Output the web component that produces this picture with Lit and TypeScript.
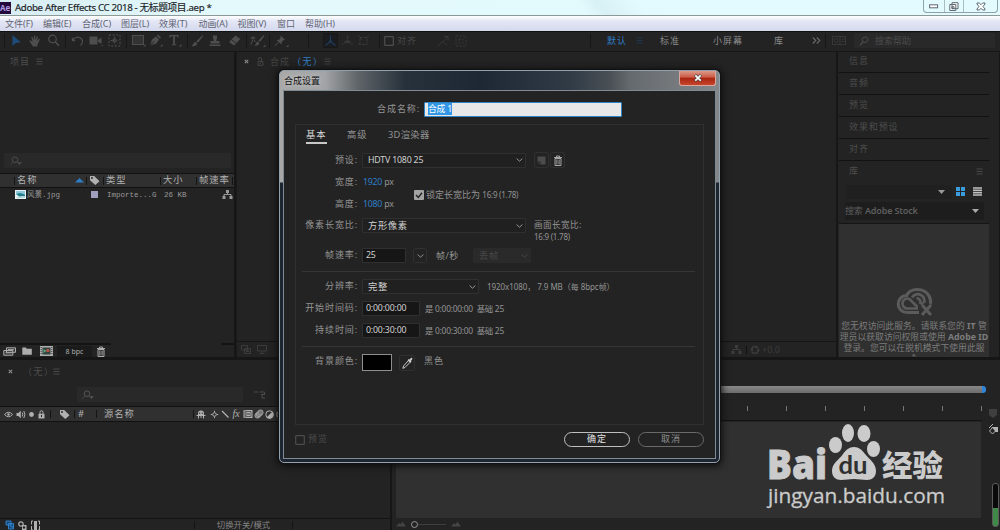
import { LitElement, html, css, svg } from "lit";
import { customElement, property } from "lit/decorators.js";

type Glyph = { w: number; h: number; d: unknown };

const trash = svg`<path d="M1 2.5h8M3.5 2V1h3v1M2 3.5h6V10.5H2zM3.9 4.5v5M6.1 4.5v5" fill="none" stroke="currentColor"/>`;
const tag = svg`<path d="M1 1h4.2L10.5 6.2 6.3 10 1 5.2z" fill="currentColor"/><circle cx="3" cy="3" r=".9" fill="#222"/>`;
const tree = svg`<path d="M4 1h3v3H4zM.5 7h3v3h-3zM7.5 7h3v3h-3z" fill="currentColor"/><path d="M5.5 4v1.5M2 7V5.5h7V7" fill="none" stroke="currentColor"/>`;

const glyphs: Record<string, Glyph> = {
  arrow: { w: 11, h: 13, d: svg`<path d="M1.5 1v11l3.2-3 5-.8z" fill="currentColor"/>` },
  hand: { w: 12, h: 12, d: svg`<path d="M4 11.5 1 7 .5 5.5l1-.3L3.600 7 2.300 2l1-.5L5 5.200 5 .6h1.100L6.500 5 7.900 1.200l1 .3L8.200 6l2-2.300.9.6L9 8.500 8 11.500z" fill="currentColor"/>` },
  zoom: { w: 13, h: 13, d: svg`<circle cx="5.500" cy="5" r="3.800" fill="none" stroke="currentColor" stroke-width="1.200"/><path d="M8.200 7.800 12 11.800" stroke="currentColor" stroke-width="1.600"/>` },
  rotate: { w: 13, h: 12, d: svg`<path d="M2.500 4.500A4.800 4.300 0 0 1 11 8.500L9.500 10.500" fill="none" stroke="currentColor" stroke-width="1.200"/><path d="M.8 2v4.200h4z" fill="currentColor"/>` },
  camera: { w: 15, h: 11, d: svg`<path d="M.5 1.500h8v8h-8zM9 5l3.500-2.500v6.500L9 6.800zM12 10h2.500l-1.200 1z" fill="currentColor"/>` },
  pan: { w: 13, h: 13, d: svg`<rect x="1" y="1" width="11" height="11" fill="none" stroke="currentColor" stroke-dasharray="2 1.600"/><path d="M6.500 2.500v8M2.500 6.500h8" stroke="currentColor" stroke-dasharray="1.500 1"/><circle cx="6.500" cy="6.500" r="1.800" fill="none" stroke="currentColor"/>` },
  rect: { w: 15, h: 13, d: svg`<rect x="1.500" y="1.500" width="11" height="9" fill="#333" stroke="currentColor"/><path d="M14.500 10v2.500H12z" fill="currentColor"/>` },
  pen: { w: 14, h: 13, d: svg`<path d="M1 11.500 3 5.500 7 2.500 10 5.500 7.300 9.500zM7.800 1.500 9 .5l3 3-1.200 1.200z" fill="currentColor"/><path d="m1 11.500 4-4" stroke="#222"/><path d="M13.500 10v2.500H11z" fill="currentColor"/>` },
  type: { w: 14, h: 13, d: svg`<path d="M1.500 1h9v2.800h-.9L9 2.300H6.900v7.900l1.400.3v.8H3.700v-.8l1.400-.3V2.300H3l-.6 1.500h-.9z" fill="currentColor"/><path d="M13.500 10v2.500H11z" fill="currentColor"/>` },
  brush: { w: 13, h: 12, d: svg`<path d="M11.800.3 5.300 6.200l1.500 1.500L12.300 1zM4.600 7C2.200 7 2.900 9.500.5 11c2.500.6 5.500 0 5.600-2.500z" fill="currentColor"/>` },
  stamp: { w: 12, h: 12, d: svg`<path d="M4 .5h4v2.300L7.200 6h3.300v2.500h-9V6h3.300L4 2.800zM.5 9.500h11v1.500H.5z" fill="currentColor"/>` },
  eraser: { w: 13, h: 11, d: svg`<path d="M7.500.5 12.300 4 6 10.500 1 7z" fill="currentColor"/><path d="m3.500 4.800 5 3.500" stroke="#222" stroke-width=".8"/>` },
  roto: { w: 16, h: 12, d: svg`<path d="M13.500.3 8.500 5.500 10 7 14.300 1zM8 6.500C6 6.500 6.500 9 4.500 10.500c2 .5 4.500 0 4.700-2.500z" fill="currentColor"/><path d="M.5 3h5M3 1v3.500L.8 9.500M4 5l1.500 2" fill="none" stroke="currentColor"/><path d="M15.500 9.500V12H13z" fill="currentColor"/>` },
  pin: { w: 15, h: 12, d: svg`<path d="M6.500.5 11 4.800 9.500 5.300 7.800 7l-.3 2.500L2.500 5l2.700-.3L6.500 3z" fill="currentColor"/><path d="M4.500 7.200.8 11" stroke="currentColor"/><path d="M14.500 9.500V12H12z" fill="currentColor"/>` },
  axis: { w: 13, h: 13, d: svg`<path d="M-.5-.500h14v14h-14z" fill="#1a1c20" stroke="#181818"/><path d="M6.500 1.500v6M6.500 7.500l-5 4M6.500 7.500l5 4" stroke="currentColor" stroke-width="1.300" fill="none"/><circle cx="6.500" cy="7.500" r="1.600" fill="currentColor"/>` },
  world: { w: 13, h: 13, d: svg`<path d="M6.500 1.500v5M5.500 7l-4 3.500M7.500 7l4 3.500" stroke="currentColor" stroke-dasharray="3 1" stroke-width="1.400" fill="none"/><path d="M4.500 6.500h4v2.500h-4z" fill="currentColor"/>` },
  viewax: { w: 13, h: 13, d: svg`<path d="M3 3.500h7v7H3zM1 1l4 5M12 1 9 4M1 11l3-3" stroke="currentColor" stroke-dasharray="3 1" fill="none"/>` },
  snap: { w: 12, h: 12, d: svg`<path d="m1 11 4.500-4.500M7 1.500h4v4M11 1.500 6 6.500l4 4" stroke="currentColor" fill="none"/>` },
  grid: { w: 12, h: 12, d: svg`<path d="M1 1h10v10H1zM4 4h4v4H4z" stroke="currentColor" stroke-dasharray="2 1.500" fill="none"/>` },
  menu: { w: 7, h: 7, d: svg`<path d="M.5 1h6M.5 3.500h6M.5 6h6" stroke="currentColor" stroke-width=".9"/>` },
  sync: { w: 14, h: 9, d: svg`<path d="M.5.5h13v8H.5zM8 .5v8M9.500 3h3M9.500 5.500h3" fill="none" stroke="currentColor"/><circle cx="4.300" cy="4.500" r="2" fill="none" stroke="currentColor"/>` },
  more: { w: 9, h: 7, d: svg`<path d="m.8.500 3 3-3 3M4.800.5l3 3-3 3" fill="none" stroke="currentColor" stroke-width="1.100"/>` },
  find: { w: 13, h: 10, d: svg`<circle cx="6" cy="3.700" r="2.800" fill="none" stroke="currentColor"/><path d="m4 5.800-3 3.500M8.500 6.500h4L10.500 8.500z" stroke="currentColor" stroke-width=".6" fill="currentColor"/>` },
  search: { w: 10, h: 10, d: svg`<circle cx="6" cy="3.700" r="2.800" fill="none" stroke="currentColor"/><path d="m4 5.800-3 3.500" stroke="currentColor" stroke-width="1.300"/>` },
  x: { w: 5, h: 5, d: svg`<path d="m.8.800 3.400 3.400M4.200.8.800 4.200" stroke="currentColor" stroke-width="1.100"/>` },
  lock: { w: 7, h: 9, d: svg`<path d="M2 4V2.200a1.500 1.500 0 0 1 3 0V4" fill="none" stroke="currentColor"/><path d="M.5 3.800h6v4.700h-6z" fill="currentColor"/><path d="M3.500 5v2" stroke="#222"/>` },
  unlock: { w: 7, h: 9, d: svg`<path d="M1.500 3V2a1.500 1.500 0 0 1 3 0V4M1 4.500h5v3.800H1zM3.500 5.500v1.500" fill="none" stroke="currentColor"/>` },
  up: { w: 9, h: 5, d: svg`<path d="M0 4.500 4.500 0 9 4.500z" fill="currentColor"/>` },
  down: { w: 7, h: 4, d: svg`<path d="M0 0h7L3.500 4z" fill="currentColor"/>` },
  chev: { w: 7, h: 4, d: svg`<path d="M.6.500 3.500 3.200 6.400.5" fill="none" stroke="currentColor"/>` },
  tag: { w: 11, h: 11, d: tag },
  tree: { w: 11, h: 11, d: tree },
  image: { w: 11, h: 9, d: svg`<path d="M0 0h11v9H0z" fill="#e6f2f4"/><path d="M1 1h9v3H1z" fill="#8bc7d8"/><path d="M1 4 5 3l5 1.500V6L4 6.500z" fill="#237e8c"/><path d="M1 7.500 10 6v2H1z" fill="#b5d3d8"/>` },
  footage: { w: 13, h: 9, d: svg`<path d="M3.500.8h9v4.500h-9zM.8 3.500h9v4.700h-9z" stroke="currentColor" fill="#333"/><path d="M2.500 5.800h6M5 2.600h6" stroke="currentColor"/>` },
  folder: { w: 10, h: 8, d: svg`<path d="M.3.500h3.500l1 1.200h5v6H.3z" fill="currentColor"/>` },
  comp: { w: 13, h: 10, d: svg`<path d="M0 0h13v10H0z" fill="currentColor"/><path d="M2.500 1.500h8v7h-8z" fill="#2f4340"/><path d="m3.500 3 3 2-3 2z" fill="#59a37a"/><circle cx="7.800" cy="4.500" r="1.800" fill="#b65045"/><path d="M1.200 1v8M11.800 1v8" stroke="#333" stroke-dasharray="1 1"/>` },
  trash: { w: 10, h: 11, d: trash },
  layers: { w: 10, h: 9, d: svg`<path d="M.5.500h6v4.500h-6zM3.500 3.500h6v5h-6z" fill="none" stroke="currentColor"/><path d="M5 5h3v2H5z" fill="currentColor"/>` },
  monitor: { w: 10, h: 9, d: svg`<path d="M.5.500h9v5.500h-9zM5 6v2M2.500 8.500h5" fill="none" stroke="currentColor"/>` },
  aperture: { w: 10, h: 10, d: svg`<circle cx="5" cy="5" r="3.300" fill="none" stroke="currentColor" stroke-width="2.200"/><path d="m5 .5-1.500 3M9 3.500 6 4M8.500 8 6.500 5.800M4.500 9.500 5.500 6.500M1 6.500 4 6" stroke="#222" stroke-width=".7"/>` },
  eye: { w: 9, h: 7, d: svg`<path d="M.5 3.500Q4.500-1 8.500 3.500 4.500 8 .5 3.500z" fill="none" stroke="currentColor"/><circle cx="4.500" cy="3.500" r="1.200" fill="currentColor"/>` },
  speaker: { w: 10, h: 9, d: svg`<path d="M.5 3h1.800L4.800.8v7.400L2.300 6H.5z" fill="currentColor"/><path d="M6.200 2.500q1.200 2 0 4M7.800 1q2.200 3.500 0 7" fill="none" stroke="currentColor"/>` },
  dot: { w: 5, h: 5, d: svg`<circle cx="2.500" cy="2.500" r="2.400" fill="currentColor"/>` },
  shy: { w: 10, h: 9, d: svg`<path d="M2 5V3.500a3 3 0 0 1 6 0V5zM.5 5h9v1h-9z" fill="currentColor"/><path d="M2.500 6v2.500M5 2v6M7.500 6v2.500" stroke="currentColor"/><path d="M3.700 2.500v1.500M6.300 2.500v1.500" stroke="#333"/>` },
  sun: { w: 9, h: 9, d: svg`<circle cx="4.500" cy="4.500" r="1.800" fill="none" stroke="currentColor"/><path d="M4.500.8v1.400M4.500 6.800v1.400M.8 4.500h1.400M6.800 4.500h1.400" stroke="currentColor"/>` },
  slash: { w: 9, h: 9, d: svg`<path d="m1 1 6.500 6.500" stroke="currentColor" stroke-width="1.300"/>` },
  fxbox: { w: 10, h: 10, d: svg`<path d="M.5 1h9v8h-9z" fill="currentColor"/><path d="M3 2.500h5v5H3zM2 1v8" stroke="#444" stroke-width=".8" fill="none"/><path d="M4 4.500h3v1H4z" fill="#333"/>` },
  blur: { w: 10, h: 10, d: svg`<circle cx="3.500" cy="6.500" r="2.600" fill="#777" stroke="currentColor" stroke-width=".8"/><circle cx="5" cy="5" r="2.600" fill="#777" stroke="currentColor" stroke-width=".8"/><circle cx="6.500" cy="3.500" r="2.600" fill="#777" stroke="currentColor" stroke-width=".8"/>` },
  adjust: { w: 9, h: 9, d: svg`<circle cx="4.500" cy="4.500" r="3.700" fill="none" stroke="currentColor"/><path d="M7.500 1.500a4 4 0 0 1-6 6z" fill="currentColor"/>` },
  cube: { w: 9, h: 9, d: svg`<path d="M4.500.5 8 2.500v4L4.500 8.500 1 6.500v-4zM1 2.500l3.500 2 3.500-2M4.500 4.500v4" fill="none" stroke="currentColor"/>` },
  flow: { w: 12, h: 9, d: svg`<path d="M0 2h4M5.500 2h5v2M7 4.500h4M8 5v3h3" stroke="currentColor" fill="none"/>` },
  tiles: { w: 9, h: 9, d: svg`<path d="M0 0h4v4H0zM5 0h4v4H5zM0 5h4v4H0zM5 5h4v4H5z" fill="currentColor"/>` },
  list: { w: 9, h: 9, d: svg`<path d="M0 1h9M0 3.300h9M0 5.600h9M0 8h9" stroke="currentColor" stroke-width="1.600"/>` },
  cloud: { w: 37, h: 29, d: svg`<path d="M10 24.500A8.500 8.500 0 0 1 9.500 7.500C12 2.500 17 1.500 20 1.500c7 0 12 4 13.500 10.500a8 8 0 0 1-1 5.500M10 24.500h12" fill="none" stroke="currentColor" stroke-width="3.200"/><path d="m20.500 19-8-8a5 5 0 1 0-1.500 9.500h10M15 9.500a6.500 6.500 0 0 1 11.500 6.500l-3-1a5 5 0 0 0-4-5" fill="none" stroke="currentColor" stroke-width="2.700"/><path d="m25 17 9 10M34 17l-9 10" stroke="#303030" stroke-width="7"/><path d="m25 17 9 10M34 17l-9 10" stroke="currentColor" stroke-width="3"/>` },
  save: { w: 9, h: 9, d: svg`<path d="M.5.500h8v8h-5v-3h-3z" fill="currentColor"/><path d="M.5 6.500h2v2z" fill="currentColor"/>` },
  dropper: { w: 11, h: 12, d: svg`<path d="m6.500 3.500-5 5.500L.8 11.300 3 10.500 8 5.300" fill="none" stroke="currentColor"/><path d="M5.500 3.200 6.700 2l.8.500L9.300.500l1.300 1.200L9 4l.5.800-1.300 1.200z" fill="currentColor"/>` },
  check: { w: 10, h: 10, d: svg`<rect width="10" height="10" rx="1" fill="#a3a3a3"/><path d="m2 5 2.300 2.500L8 2.800" fill="none" stroke="#222" stroke-width="1.400"/>` },
  box: { w: 10, h: 10, d: svg`<rect x=".7" y=".7" width="8.600" height="8.600" rx=".6" fill="none" stroke="currentColor" stroke-width="1.200"/>` },
  closeX: { w: 8, h: 8, d: svg`<path d="m1 1 6 6M7 1 1 7" stroke="#444" stroke-width="3"/><path d="m1.300 1.300 5.400 5.400M6.700 1.300 1.300 6.700" stroke="#fff" stroke-width="1.700"/>` },
  winMin: { w: 10, h: 5, d: svg`<rect x=".6" y=".8" width="8" height="3" fill="#fff" stroke="#5d6871"/>` },
  winMax: { w: 10, h: 9, d: svg`<path d="M3 .7h6v6H3zM.8 2.500h6v6h-6zM3 4.700h2v1.800H3z" fill="#fff" stroke="#5d6871"/>` },
  winX: { w: 10, h: 9, d: svg`<path d="M1 1h2.300L5 2.700 6.700 1H9v1L7 4.500 9 7v1H6.700L5 6.300 3.300 8H1V7l2-2.500L1 2z" fill="#fff" stroke="#5d6871"/>` },
  toggle1: { w: 10, h: 10, d: svg`<path d="M1 1h5v4H1zM3.500 3.500h5V9h-5z" fill="#184a78" stroke="currentColor"/><path d="M5 6h2v2" stroke="currentColor" fill="none"/>` },
  toggle2: { w: 9, h: 9, d: svg`<circle cx="3" cy="3" r="2.200" fill="none" stroke="currentColor" stroke-width="1.200"/><path d="M4 4h4.500v5H4z" fill="currentColor"/><circle cx="6" cy="6.500" r="1.200" fill="#222"/>` },
  toggle3: { w: 9, h: 9, d: svg`<path d="M3 0h3v9H3z" fill="currentColor"/><path d="M2 0H.5v3.500M.5 5v4H2M7 0h1.500v3.500M8.500 5v4H7" stroke="currentColor" fill="none"/>` },
  mount: { w: 10, h: 6, d: svg`<path d="M0 5.500 3 2l1.500 1.500L6.500.5 10 5.500z" fill="currentColor"/>` },
  marker: { w: 8, h: 9, d: svg`<path d="M0 0h8v6L4 9 0 6z" fill="currentColor"/>` },
  keys: { w: 10, h: 11, d: svg`<path d="M3.500 3H10v5H6z" fill="currentColor"/><path d="m4.500 3.500 3 3.500-3 3-3-3zM5 0 1 4" fill="#222" stroke="currentColor"/>` },
};

@customElement("ae-icon")
class AeIcon extends LitElement {
  @property() name = "";
  static styles = css`
    :host { display: inline-flex; flex: none; }
    svg { display: block; overflow: visible; }
  `;
  render() {
    const g = glyphs[this.name];
    return html`<svg width=${g.w} height=${g.h} viewBox="0 0 ${g.w} ${g.h}">${g.d}</svg>`;
  }
}

const ic = (name: string, cls = "") => html`<span class="c ${cls}"><ae-icon name=${name}></ae-icon></span>`;
const sep = html`<span class="c"><i class="sep"></i></span>`;

const base = css`
  * { box-sizing: border-box; }
  :host { font-family: "Noto Sans", "Noto Sans CJK SC", sans-serif; font-size: 9px; line-height: 14px; white-space: nowrap; }
  .c { display: flex; align-items: center; justify-content: center; min-width: 0; }
  .sep { width: 1px; height: 8px; background: #141414; }
  .t { letter-spacing: 1px; }
  .blue { color: #2f7fc8; }
`;

@customElement("comp-dialog")
class CompDialog extends LitElement {
  static styles = [base, css`
    :host { display: flex; flex-direction: column; width: 441px; height: 393px; border: 1px solid #93a1ad; border-radius: 5px; padding: 0 3px 3px; color: #939393;
      background: linear-gradient(#0000 0 111px, #1d2630 112px) , linear-gradient(90deg, #a8a8a8 0, #a2a4a6 45px, #5f6468 78px, #27313b 125px, #1d2834 200px, #303b46 290px, #4a5055 330px, #656a6e 350px, #85888b 100%);
      box-shadow: 0 0 0 1px #111, 0 1px 7px 2px #0d0d0d; }
    .bar { display: flex; justify-content: space-between; height: 19px; padding-left: 1px; color: #101010; font-size: 9px; line-height: 19px; text-shadow: 0 0 4px #ddd; }
    .close { width: 37px; height: 15px; border: 1px solid #d9a79d; border-top: 0; border-radius: 0 0 3px 3px; background: linear-gradient(#dc9a8a 0, #cb5a45 45%, #a8240f 50%, #c8452c); }
    .body { flex: 1; border: 1px solid #7f8c96; background: #232323; padding: 11px 11px 0; display: flex; flex-direction: column; }
    .row { display: grid; align-items: center; }
    .name { grid-template-columns: 125px 198px; column-gap: 4px; height: 15px; margin-bottom: 7px; }
    .lab { text-align: right; letter-spacing: .9px; padding-bottom: 1px; }
    .field { height: 15px; background: #161616; border: 1px solid #303030; border-radius: 1px; color: #d0d0d0; padding-left: 3px; line-height: 13px; font-size: 8.8px; letter-spacing: -0.2px; }
    .title { background: #e8e8e8; border-color: #2e83c4; padding-left: 3px; }
    .title span { background: #3296e6; color: #fff; display: inline-block; height: 12px; line-height: 12px; font-size: 8.8px; }
    .group { border: 1px solid #303030; height: 301px; width: 409px; padding: 0 9px 0 6px; }
    .tabs { display: grid; grid-template-columns: 41px 41px 60px; padding: 2px 0 0 4px; height: 27px; line-height: 15px; letter-spacing: 1px; font-size: 9.3px; }
    .tabs .sm { letter-spacing: .3px; }
    .on span { color: #d8d8d8; border-bottom: 2px solid #c8c8c8; display: inline-block; padding-bottom: 1px; height: 17px; width: 21px; }
    .select { display: flex; align-items: center; justify-content: space-between; padding: 0 2px 0 5px; background: #202020; }
    .select ae-icon { color: #999; }
    .off ae-icon { color: #474747; }
    .cjk { letter-spacing: .6px; font-size: 9.3px; }
    .lat { letter-spacing: -0.25px; font-size: 8.8px; }
    .btn { height: 16px; border: 1px solid #303030; border-radius: 2px; }
    .preset { grid-template-columns: 56px 164px 19px 19px; column-gap: 4px; height: 16px; }
    .preset .save { margin-left: 4px; width: 15px; color: #4c4c4c; }
    .preset .del { margin-left: -3px; width: 15px; color: #a5a5a5; }
    .size { grid-template-columns: 56px 46px 1fr; column-gap: 5px; height: 44px; margin-top: 3px; grid-template-rows: 22px 22px; }
    .lockrow { grid-column: 3; grid-row: 1 / 3; display: flex; align-items: center; gap: 2px; margin-top: 4px; }
    .lockrow .lat { font-size: 8px; }
    .aspect { grid-template-columns: 56px 164px 1fr; grid-template-rows: 22px; column-gap: 4px; height: 22px; margin-top: 0; }
    .aspect .field { margin-top: -1px; } .aspect .lab { margin-top: -1px; }
    .aspect .note { margin-left: 4px; line-height: 11px; align-self: start; padding-top: 4px; font-size: 8px; }
    .note .cjk { font-size: 8.600px; letter-spacing: 0.4px; }
    .rate { grid-template-columns: 56px 44px 17px 36px 67px; column-gap: 4px; height: 15px; margin-top: 11px; }
    .rate .pick { margin-left: 3px; width: 14px; height: 15px; }
    .rate .fps { margin-left: 5px; letter-spacing: .4px; }
    .rate .off { margin-left: 2px; background: #2a2a2a; color: #474747; border-color: #2a2a2a; width: 58px; }
    hr { height: 1px; border: 0; background: #363636; margin: 8px -1px 7px 0; }
    .res { grid-template-columns: 56px 117px 1fr; column-gap: 4px; height: 15px; }
    .res .lat { margin-left: 4px; letter-spacing: -.06px; font-size: 8px; }
    .time { grid-template-columns: 56px 58px 1fr; column-gap: 4px; height: 15px; margin-top: 7px; }
    .time .lat { margin-left: 1px; font-size: 8.4px; }
    .color { grid-template-columns: 56px 30px 19px 1fr; column-gap: 4px; height: 17px; }
    .swatch { height: 17px; background: #000; border: 1px solid #8e8e8e; }
    .pickc { margin-left: 3px; width: 16px; color: #c8c8c8; }
    .blk { margin-left: 5px; }
    .raise { padding-bottom: 3px; }
    .foot { display: flex; align-items: center; height: 17px; margin-top: 6px; color: #4c4c4c; gap: 3px; width: 409px; }
    .foot .t { flex: 1; padding-bottom: 2px; }
    .pill { width: 66px; height: 15px; border: 1px solid #6a6a6a; border-radius: 8px; color: #8f8f8f; text-align: center; line-height: 12px; letter-spacing: 1px; margin-left: 5px; }
    .ok { border-color: #c0c0c0; color: #e2e2e2; }
  `];
  render() {
    return html`
      <div class="bar"><span>合成设置</span><span class="close c"><ae-icon name="closeX"></ae-icon></span></div>
      <div class="body">
        <div class="row name"><span class="lab">合成名称:</span><div class="field title"><span>合成 1</span></div></div>
        <div class="group">
          <div class="tabs"><div class="on"><span>基本</span></div><span>高级</span><span class="sm">3D渲染器</span></div>
          <div class="row preset"><span class="lab">预设:</span><div class="field select"><span>HDTV 1080 25</span><ae-icon name="chev"></ae-icon></div>${ic("save", "btn save")}${ic("trash", "btn del")}</div>
          <div class="row size">
            <span class="lab">宽度:</span><span class="lat"><span class="blue">1920</span> px</span>
            <div class="lockrow"><ae-icon name="check"></ae-icon><span>锁定长宽比为 <span class="lat">16:9 (1.78)</span></span></div>
            <span class="lab">高度:</span><span class="lat"><span class="blue">1080</span> px</span>
          </div>
          <div class="row aspect"><span class="lab">像素长宽比:</span><div class="field select"><span class="cjk">方形像素</span><ae-icon name="chev"></ae-icon></div><div class="note lat"><span class="cjk">画面长宽比:</span><br>16:9 (1.78)</div></div>
          <div class="row rate"><span class="lab">帧速率:</span><div class="field">25</div><span class="btn c pick"><ae-icon name="chev"></ae-icon></span><span class="fps">帧/秒</span><div class="field select off"><span class="cjk">丢帧</span><ae-icon name="chev"></ae-icon></div></div>
          <hr>
          <div class="row res"><span class="lab">分辨率:</span><div class="field select"><span class="cjk">完整</span><ae-icon name="chev"></ae-icon></div><span class="lat">1920x1080， 7.9 MB（每 8bpc帧）</span></div>
          <div class="row time"><span class="lab">开始时间码:</span><div class="field">0:00:00:00</div><span class="lat">是 0:00:00:00 &nbsp;基础 25</span></div>
          <div class="row time"><span class="lab">持续时间:</span><div class="field">0:00:30:00</div><span class="lat">是 0:00:30:00 &nbsp;基础 25</span></div>
          <hr>
          <div class="row color"><span class="lab raise">背景颜色:</span><div class="swatch"></div><span class="btn c pickc"><ae-icon name="dropper"></ae-icon></span><span class="t blk raise">黑色</span></div>
        </div>
        <div class="foot"><ae-icon name="box"></ae-icon><span class="t">预览</span><div class="pill ok">确定</div><div class="pill">取消</div></div>
      </div>`;
  }
}

@customElement("app-root")
class AppRoot extends LitElement {
  static styles = [base, css`
    :host { display: flex; flex-direction: column; width: 1000px; height: 530px; overflow: hidden; position: relative; background: #161616; color: #4d4d4d; }
    .r { display: grid; align-items: center; }
    .r > .c { align-self: stretch; }
    .titlebar { display: grid; grid-template-columns: 15px 1fr 77px; height: 16px; flex: none; border-bottom: 1px solid #8b9998; color: #1b2226; font-size: 9.7px; line-height: 15px;
      background: linear-gradient(50deg, #0000 58%, #cfe9ee88 60%, #0000 64%), linear-gradient(90deg, #d7edf3, #e3f9fc 22%, #e3fbff); }
    .logo { width: 11px; height: 12px; margin-top: 2px; background: #240a3c; color: #b09be0; font-size: 8px; line-height: 12px; font-weight: bold; }
    .title { letter-spacing: -.34px; -webkit-text-stroke: .15px #1b2226; }
    .win { display: grid; grid-template-columns: 20px 19px 34px; width: 75px; height: 13px; border: 1px solid #8fa2a7; border-top: 0; border-radius: 0 0 4px 4px; }
    .win .c + .c { border-left: 1px solid #a9bcc0; }
    .menubar { grid-template-columns: 38px 39px 39px 38px 39.500px 39px 39.500px 28px 1fr; flex: none; padding-left: 5px; height: 15px; color: #5f6473; font-size: 9px; background: linear-gradient(#fff, #e3e6f5 35%, #d5d9ed); line-height: 14px; }
    .toolbar { height: 20px; flex: none; border-top: 1px solid #111; background: #232323; color: #4e4e4e; padding-bottom: 2px;
      grid-template-columns: 8px 17px 19px 18px 6px 18px 20px 16px 8px 16px 20px 18px 6px 15px 20px 18px 6px 18px 4px 21px 13px 6px 10px 18px 16px 17px 4px 6px 2px 10px 3px 36px 19px 17px 119px 5px 14px 24px 16px 13px 53px 61px 26px 23px 5px 4px 14px 1fr; }
    .toolbar .sep { height: 14px; background: #171717; }
    .toolbar > .t { line-height: 13px; padding-bottom: 1px; }
    .toolbar .t, .s { color: #8b8b8b; }
    .toolbar .dim { color: #484848; } .toolbar .blue { color: #2f7fc8; }
    .dim2 { color: #383838; } .navy { color: #1e4c7b; } .deep { color: #203956; }
    .toolbar .more { padding-left: 10px; color: #6a6a6a; }
    .search { display: grid; grid-template-columns: 21px 1fr; background: #292929; height: 15px; margin: 0 5px 0 8px; color: #4c4c4c; line-height: 15px; }
    .search .c { padding-right: 2px; }
    .upper { display: grid; grid-template-columns: 234px 600px 161px; grid-template-rows: 305px; column-gap: 2px; height: 307px; margin-top: 1px; flex: none; }
    .upper > div { background: #232323; display: flex; flex-direction: column; min-width: 0; min-height: 0; }
    .tab { height: 19px; flex: none; }
    .project .tab { grid-template-columns: 24px 10px; padding-left: 10px; }
    .find { display: flex; align-items: center; background: #292929; height: 15px; flex: none; }
    .project .find { margin: 82px 3px 5px 4px; padding-left: 5px; }
    .head { background: #303030; border-top: 1px solid #111; border-bottom: 1px solid #111; color: #b0b0b0; height: 15px; letter-spacing: .9px; font-size: 9.3px; line-height: 12px; }
    .head > span:not(.c) { padding-bottom: 1px; }
    .project .head { grid-template-columns: 11px 6px 56px 12px 3px 13px 5px 51px 6px 30px 6px 32px 3px; }
    .file { grid-template-columns: 13px 14px 60px 15px 5px 57px 55px 16px; font: 7.5px/12px "Liberation Mono", "Noto Sans CJK SC", monospace; color: #999; height: 13px; }
    .chip { width: 7px; height: 7px; background: #a09fc0; }
    .grow { flex: 1; }
    .edges { display: flex; justify-content: space-between; }
    .edges i { height: 2px; background: #141414; width: 111px; } .edges i + i { width: 13px; }
    .pfoot { height: 12px; grid-template-columns: 18px 18px 21px 35px 18px; color: #adadad; }
    .bpc { background: #1b1b1b; font-size: 7px; height: 11px; line-height: 11px; text-align: center; }
    .comp { border-left: 1px solid #1a1a1a; }
    .comp .tab { grid-template-columns: 19px 8px 6px 22px 31px 8px; justify-content: start; color: #444; }
    .paren { letter-spacing: 1.5px; }
    .cfoot { height: 16px; border-top: 1px solid #151515; grid-template-columns: 17px 16px 458px 16px 4px 14px 1fr; color: #3c3c3c; }
    .side { padding-left: 1px; }
    .side .fold { height: 22px; width: 150px; border-bottom: 1px solid #121212; padding: 1px 0 0 10px; line-height: 18px; letter-spacing: .9px; flex: none; }
    .side .fold:first-child { height: 21px; padding-top: 0; }
    .side .lib { height: 22px; grid-template-columns: 125px 10px; padding: 0 0 2px 10px; flex: none; }
    .src { grid-template-columns: 107px 17px 17px; padding-left: 6px; height: 17px; color: #c0c0c0; flex: none; }
    .src .blue { color: #3b9bdc; }
    .src .pick { height: 14px; background: #202020; justify-content: flex-end; padding-right: 7px; color: #999; align-self: center; }
    .stock { margin: 2px 0 3px 6px; width: 139px; height: 18px; flex: none; background: #1d1d1d; display: flex; justify-content: space-between; align-items: center; color: #5e5e5e; padding-right: 5px; font-size: 9px; letter-spacing: -.15px; }
    .stock b { font-weight: 600; } .stock ae-icon { color: #aaa; }
    .msg { flex: 1; min-height: 0; width: 150px; background: #303030; color: #7c7c7c; text-align: center; padding-top: 64px; line-height: 11px; font-size: 8.800px; overflow: hidden; letter-spacing: .02px; border-top: 1px solid #151515; }
    .msg .c { color: #5b5b5b; margin: 0 0 4px 3px; }
    .msg .last { font-size: 5px; line-height: 5px; }
    .lower { flex: 1; display: grid; grid-template-columns: 392px 1fr 14px; background: #232323; margin-top: 1px; min-height: 0; }
    .layers { display: flex; flex-direction: column; border-right: 2px solid #161616; min-width: 0; }
    .ttab { height: 23px; grid-template-columns: 20px 31px 10px; flex: none; }
    .ttab .paren { padding-left: 3px; }
    .tfind { grid-template-columns: 77px 166px 34px; height: 23px; flex: none; }
    .tfind .find { padding-left: 4px; color: #565656; }
    .thead { grid-template-columns: 16px 10px 10px 11px 7px 20px 1px 13px 16px 89px 1px 14px 12px 10px 12px 11px 11px 11px 11px; flex: none; height: 16px; }
    .foot { height: 12px; border-top: 1px solid #141414; grid-template-columns: 4px 11px 14px 13px 152px 1px 97px 1px; color: #b0b0b0; flex: none; line-height: 12px; }
    .foot .mode { text-align: center; font-size: 8.400px; color: #858585; }
    .serif { font: italic 10px/12px "Liberation Serif", serif; letter-spacing: 0; }
    .graph { display: flex; flex-direction: column; padding-left: 4px; min-width: 0; }
    .work { height: 7px; flex: none; margin: 26px 0 0 0; background: linear-gradient(#888, #6c6c6c); border-right: 4px solid #2f86d8; border-radius: 0 3px 3px 0; }
    .ruler { height: 28px; flex: none; margin-right: 4px; display: flex; justify-content: flex-end; align-items: flex-end; padding: 0 0 9px 0; border-bottom: 1px solid #141414; gap: 38px; overflow: hidden; }
    .ruler i { width: 1px; height: 5px; background: #777; flex: none; }
    .canvas { flex: 1; background: #303030; margin-right: 5px; margin-top: 1px; }
    .gfoot { height: 12px; display: flex; align-items: center; gap: 5px; color: #444; }
    .knob { width: 7px; height: 7px; border: 1px solid #999; border-radius: 50%; } .rail { width: 28px; height: 1px; background: #3f3f3f; margin-left: -5px; }
    .strip { display: flex; flex-direction: column; align-items: center; padding-top: 49px; color: #3f3f3f; }
    .keys { color: #b4b4b4; margin-top: 6px; }
    .meter { width: 7px; height: 44px; margin: 48px 0 0 5px; border: 1px solid #5c5c5c; border-radius: 3px; background: linear-gradient(#0a0a0a 57%, #3f8a48 58%); }
    comp-dialog { position: absolute; left: 279px; top: 70px; }
    .mark { position: absolute; left: 760px; top: 418px; }
  `];
  render() {
    const menus = ["文件(F)", "编辑(E)", "合成(C)", "图层(L)", "效果(T)", "动画(A)", "视图(V)", "窗口", "帮助(H)"];
    const e = html`<span></span>`;
    return html`
      <div class="titlebar"><span class="logo">Ae</span><span class="title">Adobe After Effects CC 2018 - 无标题项目.aep *</span><div class="win">${ic("winMin")}${ic("winMax")}${ic("winX")}</div></div>
      <div class="r menubar">${menus.map((m) => html`<span>${m}</span>`)}</div>
      <div class="r toolbar">${sep}${ic("arrow", "navy")}${ic("hand")}${ic("zoom")}${sep}${ic("rotate")}${ic("camera")}${ic("pan")}${sep}${ic("rect")}${ic("pen")}${ic("type")}${sep}${ic("brush")}${ic("stamp")}${ic("eraser")}${sep}${ic("roto")}${sep}${ic("pin")}${e}${sep}${e}${ic("axis", "deep")}${ic("world", "dim2")}${ic("viewax", "dim2")}${e}${sep}${e}${ic("box")}${e}<span class="t dim">对齐</span>${ic("snap", "dim2")}${ic("grid", "dim2")}${e}${sep}${e}<span class="t blue">默认</span>${ic("menu", "deep")}${e}<span class="t">标准</span><span class="t">小屏幕</span><span class="t">库</span>${ic("more", "more")}${sep}${e}${ic("sync", "dim2")}<div class="search">${ic("search")}<span>搜索帮助</span></div></div>
      <div class="upper">
        <div class="project">
          <div class="r tab"><span class="t">项目</span>${ic("menu")}</div>
          <div class="find"><ae-icon name="find"></ae-icon></div>
          <div class="r head">${e}${sep}<span>名称</span>${ic("up", "blue")}${sep}${ic("tag")}${sep}<span>类型</span>${sep}<span>大小</span>${sep}<span>帧速率</span>${sep}</div>
          <div class="r file">${e}${ic("image")}<span>风景.jpg</span><span class="c"><i class="chip"></i></span>${e}<span>Importe...G</span><span>26 KB</span>${ic("tree")}</div>
          <div class="grow"></div>
          <div class="edges"><i></i><i></i></div>
          <div class="r pfoot">${ic("footage")}${ic("folder")}${ic("comp")}<div class="bpc">8 bpc</div>${ic("trash")}</div>
        </div>
        <div class="comp">
          <div class="r tab">${ic("x", "s")}${ic("unlock")}${e}<span class="t">合成</span><span class="blue paren">（无）</span>${ic("menu")}</div>
          <div class="grow"></div>
          <div class="r cfoot">${ic("layers")}${ic("monitor")}${e}${ic("tree")}${sep}${ic("aperture")}<span>+0.0</span></div>
        </div>
        <div class="side">
          ${["信息", "音频", "预览", "效果和预设", "对齐"].map((m) => html`<div class="fold">${m}</div>`)}
          <div class="r lib"><span>库</span>${ic("menu")}</div>
          <div class="r src">${ic("down", "pick")}${ic("tiles", "blue")}${ic("list")}</div>
          <div class="stock"><span>搜索 <b>Adobe Stock</b></span><ae-icon name="down"></ae-icon></div>
          <div class="msg">${ic("cloud")}<div>您无权访问此服务。请联系您的 <b>IT</b> 管</div><div>理员以获取访问权限或使用 <b>Adobe ID</b></div><div>登录。您可以在脱机模式下使用此服</div><div class="last">务</div></div>
        </div>
      </div>
      <div class="lower">
        <div class="layers">
          <div class="r ttab">${ic("x", "s")}<span class="paren">（无）</span>${ic("menu")}</div>
          <div class="r tfind">${e}<div class="find"><ae-icon name="find"></ae-icon></div>${ic("flow")}</div>
          <div class="r head thead">${ic("eye")}${ic("speaker")}${ic("dot")}${ic("lock")}${sep}${ic("tag")}${sep}<span class="c">#</span>${sep}<span>源名称</span>${sep}${ic("shy")}${ic("sun")}${ic("slash")}<span class="c serif">fx</span>${ic("fxbox")}${ic("blur")}${ic("adjust")}${ic("cube")}</div>
          <div class="grow"></div>
          <div class="r foot">${e}${ic("toggle1", "blue")}${ic("toggle2")}${ic("toggle3")}${e}${sep}<span class="mode">切换开关/模式</span>${sep}</div>
        </div>
        <div class="graph">
          <div class="work"></div>
          <div class="ruler">${Array.from({ length: 15 }, () => html`<i></i>`)}</div>
          <div class="canvas"></div>
          <div class="gfoot"><ae-icon name="mount"></ae-icon><span class="knob"></span><span class="rail"></span><ae-icon name="mount"></ae-icon></div>
        </div>
        <div class="strip"><ae-icon name="marker"></ae-icon><ae-icon class="keys" name="keys"></ae-icon><div class="meter"></div></div>
      </div>
      <comp-dialog></comp-dialog>
      <svg class="mark" width="200" height="100" viewBox="760 418 200 100" fill="#cbcbcb">
        <text x="767" y="479" font-family="Open Sans" font-weight="800" font-size="41" textLength="60" lengthAdjust="spacingAndGlyphs" stroke="#cbcbcb" stroke-width=".8">Bai</text>
        <ellipse cx="835.500" cy="445" rx="6.500" ry="8"/><ellipse cx="848" cy="433" rx="6" ry="9"/><ellipse cx="864" cy="433.500" rx="6.500" ry="8.500"/><ellipse cx="873.500" cy="449" rx="6.500" ry="8"/>
        <path d="M854 447c5 0 8 3 11 7 4 5 11 9 11 17 0 6-4 9-9 9-5 0-8-1-13-1s-8 1-13 1c-5 0-9-3-9-9 0-8 7-11 11-17 3-4 6-7 11-7z"/>
        <text x="838.500" y="474" fill="#303030" font-family="Lato" font-weight="700" font-size="24" textLength="29" lengthAdjust="spacingAndGlyphs">du</text>
        <text x="882" y="476" font-family="Noto Sans CJK SC" font-weight="900" font-size="30" textLength="61" lengthAdjust="spacingAndGlyphs">经验</text>
        <text x="768" y="503" font-family="Open Sans" font-size="20" stroke="#cbcbcb" stroke-width=".3" textLength="177" lengthAdjust="spacingAndGlyphs">jingyan.baidu.com</text>
      </svg>`;
  }
}
